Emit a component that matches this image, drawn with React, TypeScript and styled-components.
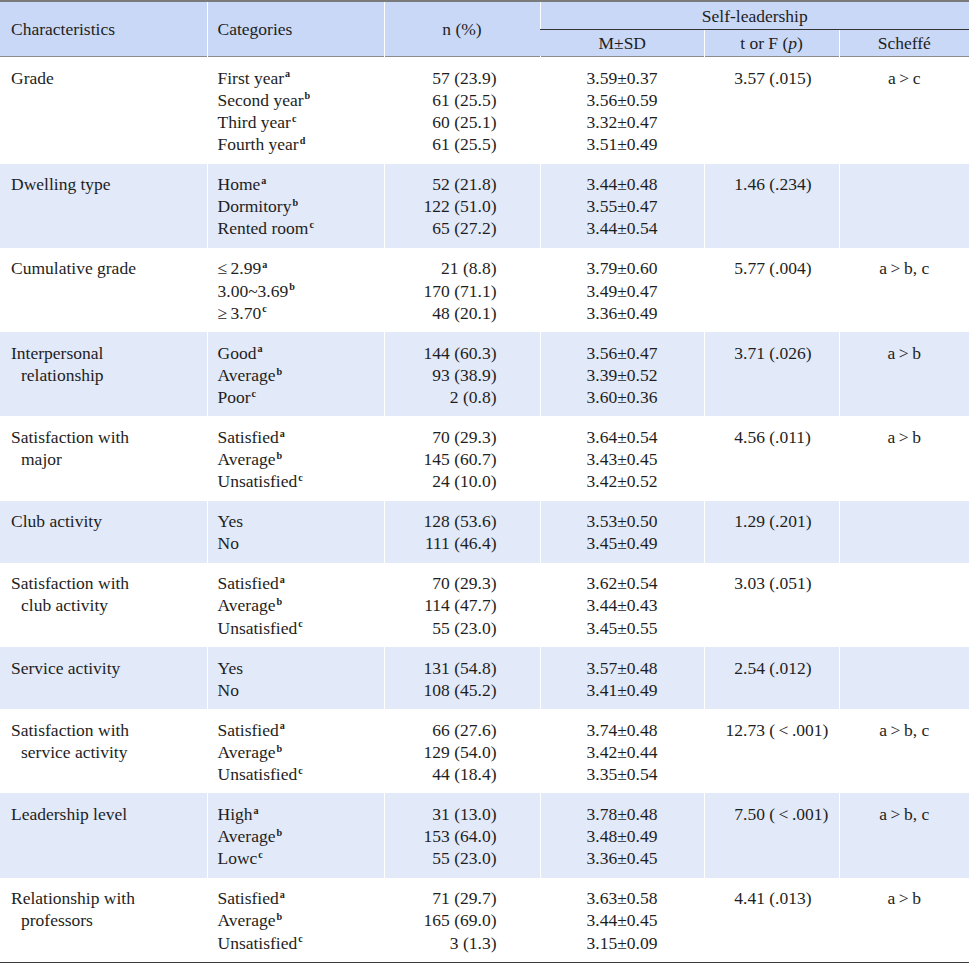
import React from "react";
import styled, { createGlobalStyle } from "styled-components";

const GlobalStyle = createGlobalStyle`
  body {
    margin: 0;
    background: #ffffff;
  }
`;

type Cat = { label: string; sup?: string };

type Row = {
  name: string[];
  cats: Cat[];
  n: string[];
  msd: string[];
  stat: [string, string];
  scheffe?: string;
};

const LT = "\u2009<\u2009";

const rows: Row[] = [
  {
    name: ["Grade"],
    cats: [
      { label: "First year", sup: "a" },
      { label: "Second year", sup: "b" },
      { label: "Third year", sup: "c" },
      { label: "Fourth year", sup: "d" },
    ],
    n: ["57 (23.9)", "61 (25.5)", "60 (25.1)", "61 (25.5)"],
    msd: ["3.59±0.37", "3.56±0.59", "3.32±0.47", "3.51±0.49"],
    stat: ["3", ".57 (.015)"],
    scheffe: "a\u2009>\u2009c",
  },
  {
    name: ["Dwelling type"],
    cats: [
      { label: "Home", sup: "a" },
      { label: "Dormitory", sup: "b" },
      { label: "Rented room", sup: "c" },
    ],
    n: ["52 (21.8)", "122 (51.0)", "65 (27.2)"],
    msd: ["3.44±0.48", "3.55±0.47", "3.44±0.54"],
    stat: ["1", ".46 (.234)"],
  },
  {
    name: ["Cumulative grade"],
    cats: [
      { label: "≤\u20092.99", sup: "a" },
      { label: "3.00~3.69", sup: "b" },
      { label: "≥\u20093.70", sup: "c" },
    ],
    n: ["21 (8.8)", "170 (71.1)", "48 (20.1)"],
    msd: ["3.79±0.60", "3.49±0.47", "3.36±0.49"],
    stat: ["5", ".77 (.004)"],
    scheffe: "a\u2009>\u2009b, c",
  },
  {
    name: ["Interpersonal", "relationship"],
    cats: [
      { label: "Good", sup: "a" },
      { label: "Average", sup: "b" },
      { label: "Poor", sup: "c" },
    ],
    n: ["144 (60.3)", "93 (38.9)", "2 (0.8)"],
    msd: ["3.56±0.47", "3.39±0.52", "3.60±0.36"],
    stat: ["3", ".71 (.026)"],
    scheffe: "a\u2009>\u2009b",
  },
  {
    name: ["Satisfaction with", "major"],
    cats: [
      { label: "Satisfied", sup: "a" },
      { label: "Average", sup: "b" },
      { label: "Unsatisfied", sup: "c" },
    ],
    n: ["70 (29.3)", "145 (60.7)", "24 (10.0)"],
    msd: ["3.64±0.54", "3.43±0.45", "3.42±0.52"],
    stat: ["4", ".56 (.011)"],
    scheffe: "a\u2009>\u2009b",
  },
  {
    name: ["Club activity"],
    cats: [{ label: "Yes" }, { label: "No" }],
    n: ["128 (53.6)", "111 (46.4)"],
    msd: ["3.53±0.50", "3.45±0.49"],
    stat: ["1", ".29 (.201)"],
  },
  {
    name: ["Satisfaction with", "club activity"],
    cats: [
      { label: "Satisfied", sup: "a" },
      { label: "Average", sup: "b" },
      { label: "Unsatisfied", sup: "c" },
    ],
    n: ["70 (29.3)", "114 (47.7)", "55 (23.0)"],
    msd: ["3.62±0.54", "3.44±0.43", "3.45±0.55"],
    stat: ["3", ".03 (.051)"],
  },
  {
    name: ["Service activity"],
    cats: [{ label: "Yes" }, { label: "No" }],
    n: ["131 (54.8)", "108 (45.2)"],
    msd: ["3.57±0.48", "3.41±0.49"],
    stat: ["2", ".54 (.012)"],
  },
  {
    name: ["Satisfaction with", "service activity"],
    cats: [
      { label: "Satisfied", sup: "a" },
      { label: "Average", sup: "b" },
      { label: "Unsatisfied", sup: "c" },
    ],
    n: ["66 (27.6)", "129 (54.0)", "44 (18.4)"],
    msd: ["3.74±0.48", "3.42±0.44", "3.35±0.54"],
    stat: ["12", `.73 (${LT}.001)`],
    scheffe: "a\u2009>\u2009b, c",
  },
  {
    name: ["Leadership level"],
    cats: [
      { label: "High", sup: "a" },
      { label: "Average", sup: "b" },
      { label: "Lowc", sup: "c" },
    ],
    n: ["31 (13.0)", "153 (64.0)", "55 (23.0)"],
    msd: ["3.78±0.48", "3.48±0.49", "3.36±0.45"],
    stat: ["7", `.50 (${LT}.001)`],
    scheffe: "a\u2009>\u2009b, c",
  },
  {
    name: ["Relationship with", "professors"],
    cats: [
      { label: "Satisfied", sup: "a" },
      { label: "Average", sup: "b" },
      { label: "Unsatisfied", sup: "c" },
    ],
    n: ["71 (29.7)", "165 (69.0)", "3 (1.3)"],
    msd: ["3.63±0.58", "3.44±0.45", "3.15±0.09"],
    stat: ["4", ".41 (.013)"],
    scheffe: "a\u2009>\u2009b",
  },
];

const colWidths = [207, 177, 156, 164, 135, 130];

const Table = styled.table`
  width: 969px;
  border-collapse: collapse;
  table-layout: fixed;
  font-family: "Liberation Serif", "DejaVu Serif", serif;
  font-size: 17.5px;
  color: #1e1e1e;
  border-top: 2px solid #7b7b7b;
  border-bottom: 2px solid #3a3a3a;
`;

const Head = styled.thead`
  background: #c9d8f7;
  border-bottom: 1px solid #8c8c8c;
`;

const Th = styled.th<{ $align?: "left" | "center"; $rule?: boolean; $h: number }>`
  height: ${(p) => p.$h}px;
  padding: 0 10px;
  font-weight: normal;
  text-align: ${(p) => p.$align || "center"};
  vertical-align: middle;
  border-left: 1px solid #ffffff;
  border-bottom: ${(p) => (p.$rule ? "1px solid #333333" : "none")};
  line-height: 18px;

  &:first-child {
    border-left: none;
    padding-left: 11px;
  }
`;

const BodyRow = styled.tr<{ $shaded: boolean }>`
  background: ${(p) => (p.$shaded ? "#e2e9f9" : "#ffffff")};
`;

const Td = styled.td<{ $align?: "left" | "right" | "center" }>`
  padding: 9.5px 10px 8.2px;
  vertical-align: top;
  line-height: 22.2px;
  text-align: ${(p) => p.$align || "left"};
  border-left: 1px solid #ffffff;
  white-space: nowrap;
`;

const NameCell = styled(Td)`
  border-left: none;
  padding-left: 11px;
`;

const NumCell = styled(Td)`
  padding-right: 43px;
`;

const StatCell = styled(Td)`
  padding-left: 21px;
`;

const Line = styled.div<{ $indent?: boolean }>`
  padding-left: ${(p) => (p.$indent ? "10px" : "0")};
`;

const Sup = styled.sup`
  font-size: 0.58em;
  font-weight: bold;
  line-height: 0;
  vertical-align: 0.62em;
  margin-left: 1px;
`;

const IntPart = styled.span`
  display: inline-block;
  min-width: 17.5px;
  text-align: right;
`;

const Italic = styled.i`
  font-style: italic;
`;

export default function App() {
  return (
    <>
      <GlobalStyle />
      <Table>
        <colgroup>
          {colWidths.map((w, i) => (
            <col key={i} style={{ width: w }} />
          ))}
        </colgroup>
        <Head>
          <tr>
            <Th rowSpan={2} $align="left" $h={27}>
              Characteristics
            </Th>
            <Th rowSpan={2} $align="left" $h={27}>
              Categories
            </Th>
            <Th rowSpan={2} $h={27}>
              n (%)
            </Th>
            <Th colSpan={3} $rule $h={27}>
              Self-leadership
            </Th>
          </tr>
          <tr>
            <Th $h={26}>M±SD</Th>
            <Th $h={26}>
              t or F (<Italic>p</Italic>)
            </Th>
            <Th $h={26}>Scheffé</Th>
          </tr>
        </Head>
        <tbody>
          {rows.map((r, i) => (
            <BodyRow key={r.name.join(" ")} $shaded={i % 2 === 1}>
              <NameCell>
                {r.name.map((t, j) => (
                  <Line key={t} $indent={j > 0}>
                    {t}
                  </Line>
                ))}
              </NameCell>
              <Td>
                {r.cats.map((c) => (
                  <Line key={c.label}>
                    {c.label}
                    {c.sup && <Sup>{c.sup}</Sup>}
                  </Line>
                ))}
              </Td>
              <NumCell $align="right">
                {r.n.map((t, j) => (
                  <Line key={j}>{t}</Line>
                ))}
              </NumCell>
              <Td $align="center">
                {r.msd.map((t, j) => (
                  <Line key={j}>{t}</Line>
                ))}
              </Td>
              <StatCell>
                <IntPart>{r.stat[0]}</IntPart>
                {r.stat[1]}
              </StatCell>
              <Td $align="center">{r.scheffe}</Td>
            </BodyRow>
          ))}
        </tbody>
      </Table>
    </>
  );
}
